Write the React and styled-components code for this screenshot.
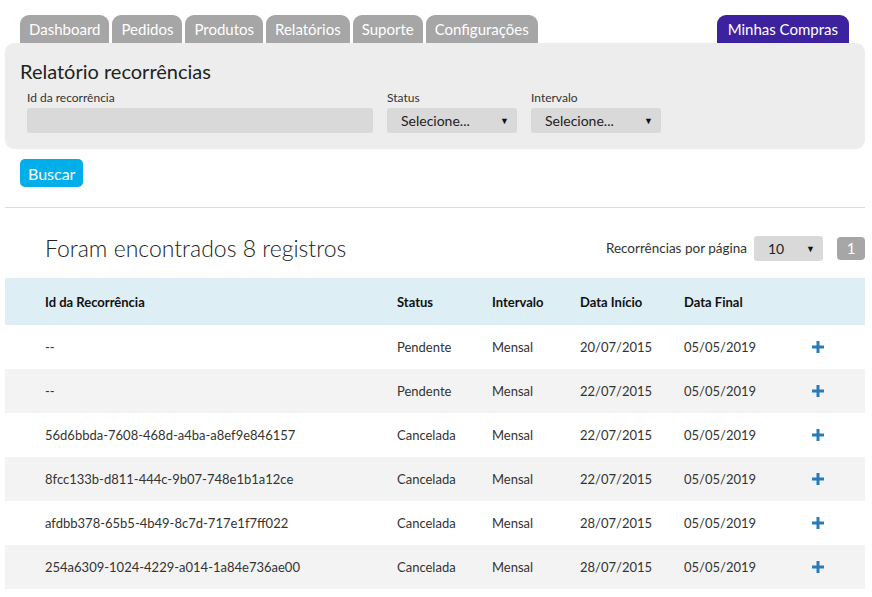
import React from "react";
import styled, { createGlobalStyle } from "styled-components";

const GlobalStyle = createGlobalStyle`
  body {
    margin: 0;
    background: #fff;
    font-family: "Lato", "Open Sans", sans-serif;
    color: #333;
  }
`;

const Page = styled.div`
  padding: 15px 7px 0 5px;
`;

const TabBar = styled.nav`
  display: flex;
  align-items: flex-end;
  padding: 0 16px 0 15px;
  height: 28px;
`;

const Tab = styled.div`
  height: 28px;
  box-sizing: border-box;
  display: flex;
  align-items: center;
  font-size: 15px;
  color: #fff;
  background: ${(p) => (p.$active ? "#3d22a0" : "#a6a6a6")};
  border-radius: 9px 9px 0 0;
  margin-left: ${(p) => (p.$right ? "auto" : "0")};
  margin-right: ${(p) => (p.$right ? "0" : "3px")};
  padding: ${(p) => (p.$right ? "0 11px" : "0 9px")};
`;

const FilterPanel = styled.section`
  background: #ededed;
  border-radius: 9px;
  padding: 15px 15px 16px 15px;
`;

const PanelTitle = styled.h2`
  margin: 0 0 6px 0;
  font-size: 20px;
  font-weight: 400;
  color: #222;
  line-height: 26px;
`;

const FieldRow = styled.div`
  display: flex;
  gap: 14px;
  padding-left: 7px;
`;

const Field = styled.label`
  display: flex;
  flex-direction: column;
  gap: 3px;
  font-size: 12px;
  color: #333;
  width: ${(p) => p.$w}px;
`;

const TextInput = styled.div`
  height: 25px;
  background: #d9d9d9;
  border-radius: 3px;
`;

const SelectBox = styled.div`
  height: 25px;
  background: #d9d9d9;
  border-radius: 3px;
  display: flex;
  align-items: center;
  justify-content: space-between;
  padding: 0 8px 0 14px;
  font-size: 14px;
  color: #222;
  width: ${(p) => (p.$w ? `${p.$w}px` : "auto")};
  box-sizing: border-box;
`;

const Arrow = styled.span`
  font-size: 9px;
  color: #111;
`;

const SearchButton = styled.button`
  margin: 10px 0 0 15px;
  height: 28px;
  padding: 0 8px;
  border: none;
  border-radius: 5px;
  background: #00aeea;
  color: #fff;
  font-family: inherit;
  font-size: 16px;
`;

const Divider = styled.hr`
  border: none;
  border-top: 1px solid #dcdcdc;
  margin: 20px 0 0 0;
`;

const ResultsBar = styled.div`
  display: flex;
  align-items: center;
  padding: 27px 0 17px 40px;
  height: 26px;
`;

const ResultsTitle = styled.h3`
  margin: 0;
  font-size: 23px;
  font-weight: 300;
  color: #222;
  flex: 1;
`;

const PerPage = styled.span`
  font-size: 13.5px;
  color: #333;
  margin-right: 7px;
`;

const PageButton = styled.div`
  margin-left: 14px;
  width: 28px;
  height: 23px;
  border-radius: 4px;
  background: #a6a6a6;
  color: #fff;
  font-size: 15px;
  display: flex;
  align-items: center;
  justify-content: center;
`;

const Table = styled.div`
  display: flex;
  flex-direction: column;
`;

const Row = styled.div`
  display: grid;
  grid-template-columns: 352px 95px 88px 104px 128px 1fr;
  align-items: center;
  padding-left: 40px;
  height: ${(p) => (p.$head ? 47 : 44)}px;
  background: ${(p) => (p.$head ? "#deeef5" : p.$alt ? "#f3f3f3" : "#fff")};
  font-size: 13px;
  font-weight: ${(p) => (p.$head ? 700 : 400)};
  color: ${(p) => (p.$head ? "#111" : "#333")};
`;

const PlusIcon = () => (
  <svg width="12" height="12" viewBox="0 0 12 12">
    <path d="M4.5 0h3v4.5H12v3H7.5V12h-3V7.5H0v-3h4.5z" fill="#2a7bb8" />
  </svg>
);

const tabs = ["Dashboard", "Pedidos", "Produtos", "Relatórios", "Suporte", "Configurações"];

const rows = [
  ["--", "Pendente", "Mensal", "20/07/2015", "05/05/2019"],
  ["--", "Pendente", "Mensal", "22/07/2015", "05/05/2019"],
  ["56d6bbda-7608-468d-a4ba-a8ef9e846157", "Cancelada", "Mensal", "22/07/2015", "05/05/2019"],
  ["8fcc133b-d811-444c-9b07-748e1b1a12ce", "Cancelada", "Mensal", "22/07/2015", "05/05/2019"],
  ["afdbb378-65b5-4b49-8c7d-717e1f7ff022", "Cancelada", "Mensal", "28/07/2015", "05/05/2019"],
  ["254a6309-1024-4229-a014-1a84e736ae00", "Cancelada", "Mensal", "28/07/2015", "05/05/2019"],
];

export default function App() {
  return (
    <Page>
      <GlobalStyle />
      <TabBar>
        {tabs.map((t) => (
          <Tab key={t}>{t}</Tab>
        ))}
        <Tab $active $right>Minhas Compras</Tab>
      </TabBar>

      <FilterPanel>
        <PanelTitle>Relatório recorrências</PanelTitle>
        <FieldRow>
          <Field $w={346}>
            Id da recorrência
            <TextInput />
          </Field>
          <Field $w={130}>
            Status
            <SelectBox>
              Selecione... <Arrow>▼</Arrow>
            </SelectBox>
          </Field>
          <Field $w={130}>
            Intervalo
            <SelectBox>
              Selecione... <Arrow>▼</Arrow>
            </SelectBox>
          </Field>
        </FieldRow>
      </FilterPanel>

      <SearchButton>Buscar</SearchButton>
      <Divider />

      <ResultsBar>
        <ResultsTitle>Foram encontrados 8 registros</ResultsTitle>
        <PerPage>Recorrências por página</PerPage>
        <SelectBox $w={69}>
          10 <Arrow>▼</Arrow>
        </SelectBox>
        <PageButton>1</PageButton>
      </ResultsBar>

      <Table>
        <Row $head>
          <span>Id da Recorrência</span>
          <span>Status</span>
          <span>Intervalo</span>
          <span>Data Início</span>
          <span>Data Final</span>
          <span />
        </Row>
        {rows.map((r, i) => (
          <Row key={i} $alt={i % 2 === 1}>
            {r.map((c, j) => (
              <span key={j}>{c}</span>
            ))}
            <PlusIcon />
          </Row>
        ))}
      </Table>
    </Page>
  );
}
